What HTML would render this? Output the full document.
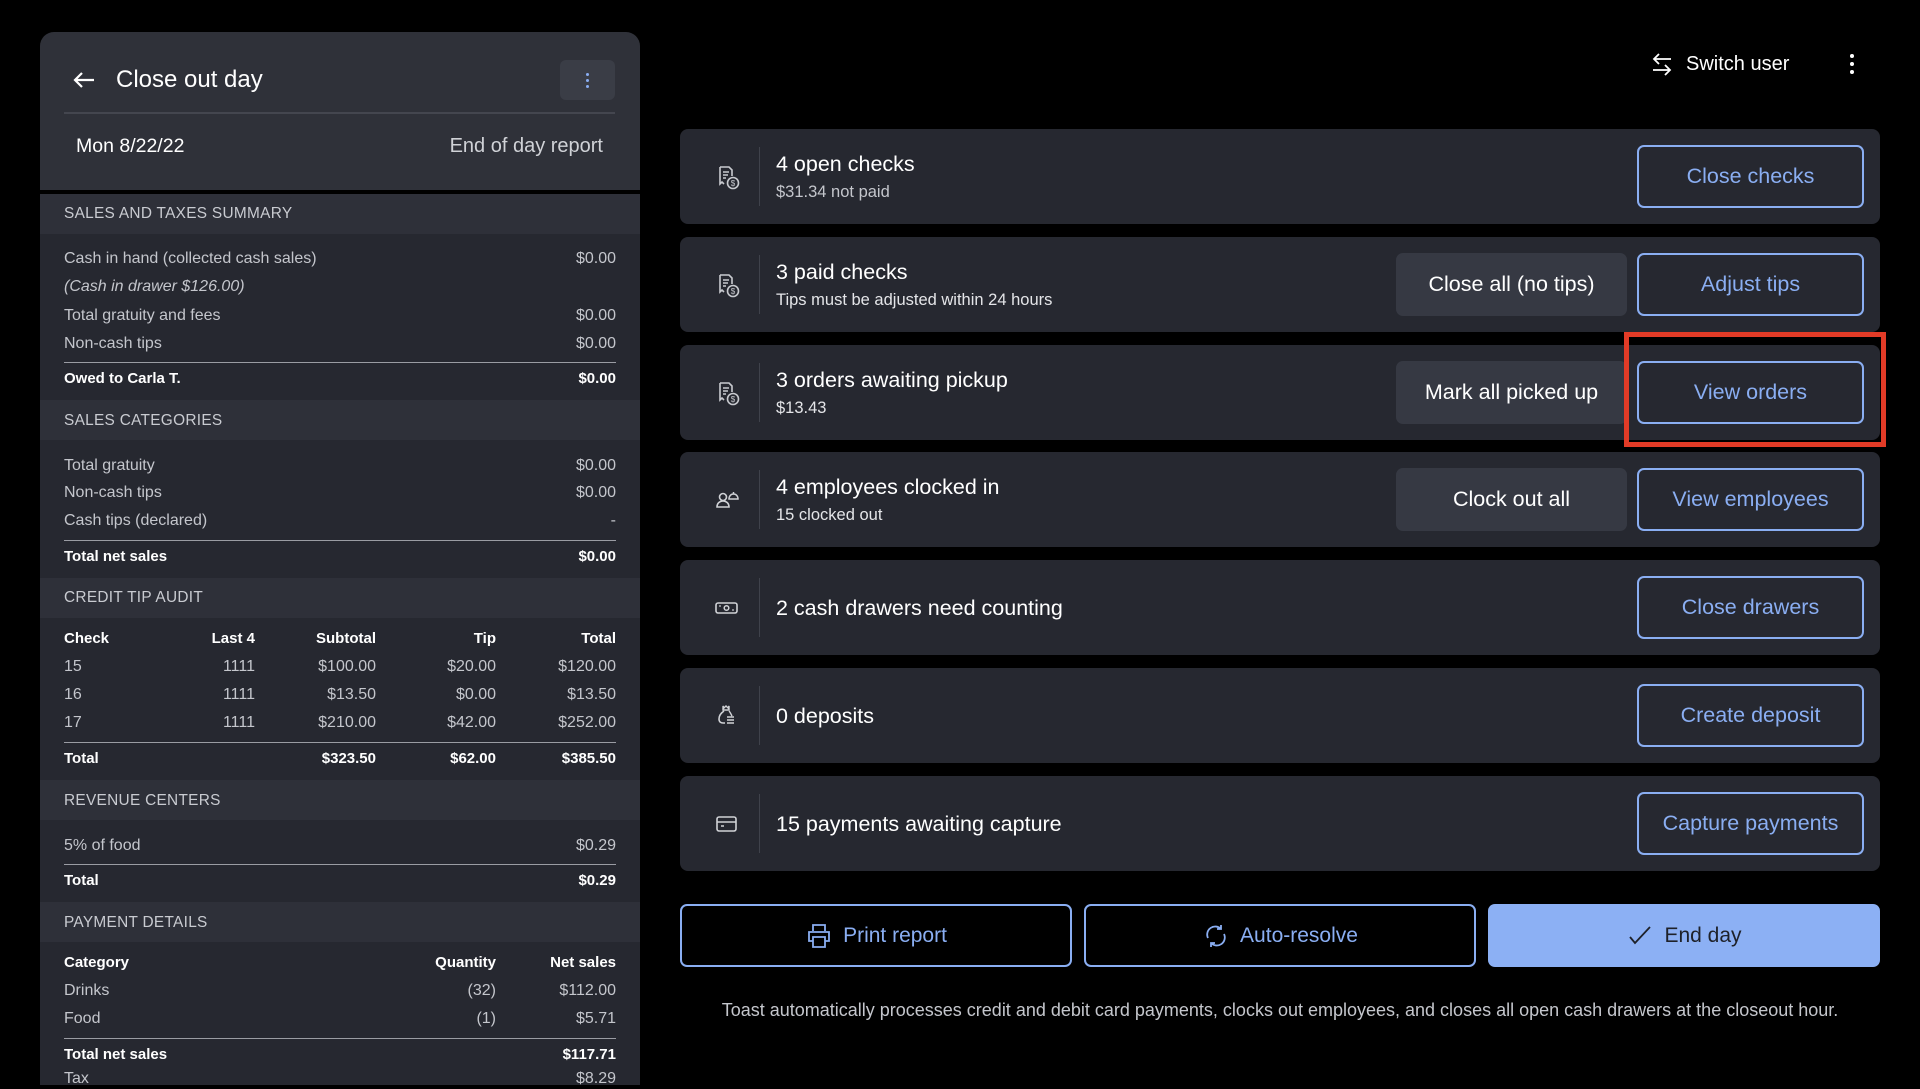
<!DOCTYPE html>
<html><head><meta charset="utf-8"><style>
*{margin:0;padding:0;box-sizing:border-box}
html,body{width:1920px;height:1085px;overflow:hidden;background:#000;font-family:"Liberation Sans",Arial,sans-serif}
.a{position:absolute;white-space:nowrap;line-height:20px;height:20px}
.l{font-size:16px;color:#c4c6cc}
.b{font-size:15px;color:#fff;font-weight:bold}
.sh{font-size:15.4px;color:#c9cbd1;letter-spacing:.3px}
.band{position:absolute;left:40px;width:600px;height:40px;background:#2e3039}
.line{position:absolute;left:64px;width:552px;height:1px;background:#9a9ca3}
.card{position:absolute;left:680px;width:1200px;height:95px;background:#262830;border-radius:8px}
.card .div{position:absolute;left:79px;top:18px;width:1px;height:59px;background:#3f424b}
.card .ic{position:absolute;left:34px;top:35px;width:26px;height:26px}
.card .t1{position:absolute;left:96px;top:22px;font-size:21.5px;color:#fff;line-height:26px}
.card .t2{position:absolute;left:96px;top:52px;font-size:16.5px;color:#e4e5e8;line-height:22px}
.card .t0{position:absolute;left:96px;top:35px;font-size:21.5px;color:#fff;line-height:26px}
.ob{position:absolute;left:957px;top:16px;width:227px;height:63px;border:2px solid #8aaef2;border-radius:7px;color:#8aaef2;font-size:21.5px;display:flex;align-items:center;justify-content:center}
.gb{position:absolute;left:716px;top:16px;width:231px;height:63px;background:#363943;border-radius:7px;color:#fff;font-size:21.5px;display:flex;align-items:center;justify-content:center}
.bb{position:absolute;top:904px;height:63px;border-radius:7px;font-size:21px;display:flex;align-items:center;justify-content:center;gap:10px}
</style></head><body>

<div style="position:absolute;left:40px;top:32px;width:600px;height:158px;background:#2f3139;border-radius:14px 14px 0 0"></div>
<div style="position:absolute;left:40px;top:194px;width:600px;height:891px;background:#262830"></div>
<svg class="a" style="left:72px;top:70px;width:24px;height:20px" viewBox="0 0 24 20"><path d="M22 10H3M10 3L3 10l7 7" stroke="#fff" stroke-width="2.2" fill="none"/></svg>
<div class="a" style="left:116px;top:66px;font-size:24px;line-height:28px;height:28px;color:#fff">Close out day</div>
<div style="position:absolute;left:560px;top:60px;width:55px;height:40px;background:#3a3d46;border-radius:6px"></div>
<div style="position:absolute;left:586px;top:73px;width:3px;height:3px;border-radius:50%;background:#8aaef2;box-shadow:0 6px 0 #8aaef2,0 12px 0 #8aaef2"></div>
<div style="position:absolute;left:64px;top:112px;width:551px;height:2px;background:#44464f"></div>
<div class="a" style="left:76px;top:135px;font-size:19.5px;line-height:22px;color:#fff">Mon 8/22/22</div>
<div class="a" style="right:1317px;top:135px;font-size:20px;line-height:22px;color:#d0d2d7">End of day report</div>

<div class="band" style="top:194px"></div>
<div class="a sh" style="left:64px;top:204px">SALES AND TAXES SUMMARY</div>
<div class="a l" style="left:64px;top:249px">Cash in hand (collected cash sales)</div><div class="a l" style="right:1304px;top:249px">$0.00</div>
<div class="a l" style="left:64px;top:277px;font-style:italic">(Cash in drawer $126.00)</div>
<div class="a l" style="left:64px;top:306px">Total gratuity and fees</div><div class="a l" style="right:1304px;top:306px">$0.00</div>
<div class="a l" style="left:64px;top:334px">Non-cash tips</div><div class="a l" style="right:1304px;top:334px">$0.00</div>
<div class="line" style="top:362px"></div>
<div class="a b" style="left:64px;top:369px">Owed to Carla T.</div><div class="a b" style="right:1304px;top:369px">$0.00</div>

<div class="band" style="top:400px"></div>
<div class="a sh" style="left:64px;top:411px">SALES CATEGORIES</div>
<div class="a l" style="left:64px;top:456px">Total gratuity</div><div class="a l" style="right:1304px;top:456px">$0.00</div>
<div class="a l" style="left:64px;top:483px">Non-cash tips</div><div class="a l" style="right:1304px;top:483px">$0.00</div>
<div class="a l" style="left:64px;top:511px">Cash tips (declared)</div><div class="a l" style="right:1304px;top:511px">-</div>
<div class="line" style="top:540px"></div>
<div class="a b" style="left:64px;top:547px">Total net sales</div><div class="a b" style="right:1304px;top:547px">$0.00</div>

<div class="band" style="top:578px"></div>
<div class="a sh" style="left:64px;top:588px">CREDIT TIP AUDIT</div>
<div class="a b" style="left:64px;top:629px">Check</div><div class="a b" style="right:1665px;top:629px">Last 4</div><div class="a b" style="right:1544px;top:629px">Subtotal</div><div class="a b" style="right:1424px;top:629px">Tip</div><div class="a b" style="right:1304px;top:629px">Total</div>
<div class="a l" style="left:64px;top:657px">15</div><div class="a l" style="right:1665px;top:657px">1111</div><div class="a l" style="right:1544px;top:657px">$100.00</div><div class="a l" style="right:1424px;top:657px">$20.00</div><div class="a l" style="right:1304px;top:657px">$120.00</div>
<div class="a l" style="left:64px;top:685px">16</div><div class="a l" style="right:1665px;top:685px">1111</div><div class="a l" style="right:1544px;top:685px">$13.50</div><div class="a l" style="right:1424px;top:685px">$0.00</div><div class="a l" style="right:1304px;top:685px">$13.50</div>
<div class="a l" style="left:64px;top:713px">17</div><div class="a l" style="right:1665px;top:713px">1111</div><div class="a l" style="right:1544px;top:713px">$210.00</div><div class="a l" style="right:1424px;top:713px">$42.00</div><div class="a l" style="right:1304px;top:713px">$252.00</div>
<div class="line" style="top:742px"></div>
<div class="a b" style="left:64px;top:749px">Total</div><div class="a b" style="right:1544px;top:749px">$323.50</div><div class="a b" style="right:1424px;top:749px">$62.00</div><div class="a b" style="right:1304px;top:749px">$385.50</div>

<div class="band" style="top:780px"></div>
<div class="a sh" style="left:64px;top:791px">REVENUE CENTERS</div>
<div class="a l" style="left:64px;top:836px">5% of food</div><div class="a l" style="right:1304px;top:836px">$0.29</div>
<div class="line" style="top:864px"></div>
<div class="a b" style="left:64px;top:871px">Total</div><div class="a b" style="right:1304px;top:871px">$0.29</div>

<div class="band" style="top:902px"></div>
<div class="a sh" style="left:64px;top:913px">PAYMENT DETAILS</div>
<div class="a b" style="left:64px;top:953px">Category</div><div class="a b" style="right:1424px;top:953px">Quantity</div><div class="a b" style="right:1304px;top:953px">Net sales</div>
<div class="a l" style="left:64px;top:981px">Drinks</div><div class="a l" style="right:1424px;top:981px">(32)</div><div class="a l" style="right:1304px;top:981px">$112.00</div>
<div class="a l" style="left:64px;top:1009px">Food</div><div class="a l" style="right:1424px;top:1009px">(1)</div><div class="a l" style="right:1304px;top:1009px">$5.71</div>
<div class="line" style="top:1038px"></div>
<div class="a b" style="left:64px;top:1045px">Total net sales</div><div class="a b" style="right:1304px;top:1045px">$117.71</div>
<div class="a l" style="left:64px;top:1069px">Tax</div><div class="a l" style="right:1304px;top:1069px">$8.29</div>

<svg style="position:absolute;left:1651px;top:52px;width:22px;height:24px" viewBox="0 0 22 24"><path d="M20 7H3M8 2L3 7l5 5M2 18h17M14 13l5 5-5 5" stroke="#fff" stroke-width="1.8" fill="none"/></svg>
<div class="a" style="left:1686px;top:52px;font-size:20px;line-height:24px;height:24px;color:#fff">Switch user</div>
<div style="position:absolute;left:1850px;top:54px;width:4px;height:4px;border-radius:50%;background:#fff;box-shadow:0 8px 0 #fff,0 16px 0 #fff"></div>

<div class="card" style="top:129px">
<svg class="ic" viewBox="0 0 26 26"><path d="M6 3h9l3 3v6M6 3v17l2-2 2 2" stroke="#c8cacf" stroke-width="1.6" fill="none"/><path d="M9 8h6M9 11h5M9 14h3" stroke="#c8cacf" stroke-width="1.5"/><circle cx="19" cy="19" r="5.5" stroke="#c8cacf" stroke-width="1.6" fill="none"/><text x="19" y="22" font-size="8" text-anchor="middle" fill="#c8cacf" font-family="Liberation Sans">$</text></svg>
<div class="div"></div><div class="t1">4 open checks</div><div class="t2" style="color:#c4c6cc">$31.34 not paid</div>
<div class="ob">Close checks</div></div>

<div class="card" style="top:237px">
<svg class="ic" viewBox="0 0 26 26"><path d="M6 3h9l3 3v6M6 3v17l2-2 2 2" stroke="#c8cacf" stroke-width="1.6" fill="none"/><path d="M9 8h6M9 11h5M9 14h3" stroke="#c8cacf" stroke-width="1.5"/><circle cx="19" cy="19" r="5.5" stroke="#c8cacf" stroke-width="1.6" fill="none"/><text x="19" y="22" font-size="8" text-anchor="middle" fill="#c8cacf" font-family="Liberation Sans">$</text></svg>
<div class="div"></div><div class="t1">3 paid checks</div><div class="t2">Tips must be adjusted within 24 hours</div>
<div class="gb">Close all (no tips)</div><div class="ob">Adjust tips</div></div>

<div class="card" style="top:345px">
<svg class="ic" viewBox="0 0 26 26"><path d="M6 3h9l3 3v6M6 3v17l2-2 2 2" stroke="#c8cacf" stroke-width="1.6" fill="none"/><path d="M9 8h6M9 11h5M9 14h3" stroke="#c8cacf" stroke-width="1.5"/><circle cx="19" cy="19" r="5.5" stroke="#c8cacf" stroke-width="1.6" fill="none"/><text x="19" y="22" font-size="8" text-anchor="middle" fill="#c8cacf" font-family="Liberation Sans">$</text></svg>
<div class="div"></div><div class="t1">3 orders awaiting pickup</div><div class="t2">$13.43</div>
<div class="gb">Mark all picked up</div><div class="ob">View orders</div></div>

<div class="card" style="top:452px">
<svg class="ic" viewBox="0 0 26 26"><circle cx="9" cy="10" r="3.5" stroke="#d0d2d6" stroke-width="1.6" fill="none"/><path d="M3 20c0-4 3-6 6-6s6 2 6 6z" stroke="#d0d2d6" stroke-width="1.6" fill="none"/><path d="M15 12c0-3 2-5 4.5-5s4.5 2 4.5 5zM19.5 5v2" stroke="#d0d2d6" stroke-width="1.5" fill="none"/></svg>
<div class="div"></div><div class="t1">4 employees clocked in</div><div class="t2">15 clocked out</div>
<div class="gb">Clock out all</div><div class="ob">View employees</div></div>

<div class="card" style="top:560px">
<svg class="ic" viewBox="0 0 26 26"><rect x="2" y="8" width="21" height="10" rx="2" stroke="#d0d2d6" stroke-width="1.6" fill="none"/><circle cx="12.5" cy="13" r="2.3" stroke="#d0d2d6" stroke-width="1.5" fill="none"/><circle cx="6" cy="11" r=".9" fill="#d0d2d6"/><circle cx="19" cy="15" r=".9" fill="#d0d2d6"/></svg>
<div class="div"></div><div class="t0">2 cash drawers need counting</div>
<div class="ob">Close drawers</div></div>

<div class="card" style="top:668px">
<svg class="ic" viewBox="0 0 26 26"><path d="M9 3l1 2 2-2 2 2 1-2v4H9z" stroke="#d0d2d6" stroke-width="1.4" fill="none"/><path d="M10 8c-3 2-5 5-5 8 0 3 2 4 4 4h2" stroke="#d0d2d6" stroke-width="1.6" fill="none"/><path d="M13 14h7M13 17h7M13 20h7M15 8c1 1 2 3 3 5" stroke="#d0d2d6" stroke-width="1.4" fill="none"/></svg>
<div class="div"></div><div class="t0">0 deposits</div>
<div class="ob">Create deposit</div></div>

<div class="card" style="top:776px">
<svg class="ic" viewBox="0 0 26 26"><rect x="3" y="6" width="19" height="14" rx="2" stroke="#d0d2d6" stroke-width="1.6" fill="none"/><path d="M3 11h19M7 15h3" stroke="#d0d2d6" stroke-width="1.6"/></svg>
<div class="div"></div><div class="t0">15 payments awaiting capture</div>
<div class="ob">Capture payments</div></div>

<div style="position:absolute;left:1624px;top:332px;width:262px;height:115px;border:5px solid #e23b27"></div>

<div class="bb" style="left:680px;width:392px;border:2px solid #8aaef2;color:#8aaef2">
<svg width="28" height="28" viewBox="0 0 28 28"><path d="M8 9V3h12v6M8 19H4V10h20v9h-4M8 15h12v10H8z" stroke="#8aaef2" stroke-width="1.8" fill="none"/></svg>Print report</div>
<div class="bb" style="left:1084px;width:392px;border:2px solid #8aaef2;color:#8aaef2">
<svg width="28" height="28" viewBox="0 0 28 28"><path d="M6 16a8 8 0 0 1 13-9M22 12a8 8 0 0 1-13 9M19 3v4h-4M9 25v-4h4" stroke="#8aaef2" stroke-width="1.8" fill="none"/></svg>Auto-resolve</div>
<div class="bb" style="left:1488px;width:392px;background:#8cb0f4;color:#1e2129">
<svg width="28" height="28" viewBox="0 0 28 28"><path d="M4 15l5 6L24 5" stroke="#1e2129" stroke-width="1.8" fill="none"/></svg>End day</div>

<div class="a" style="left:680px;width:1200px;text-align:center;top:999px;font-size:18px;line-height:22px;color:#c4c6cc">Toast automatically processes credit and debit card payments, clocks out employees, and closes all open cash drawers at the closeout hour.</div>
</body></html>
